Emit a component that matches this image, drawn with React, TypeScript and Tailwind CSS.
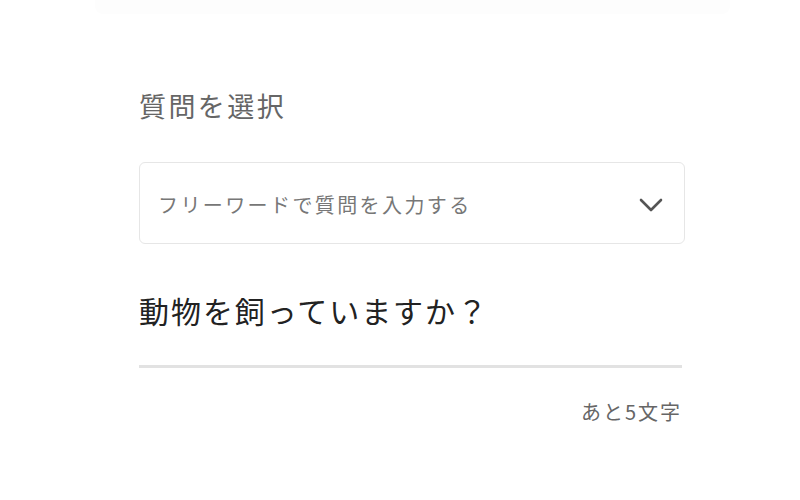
const FONT = "font-['Noto_Sans_CJK_JP','Noto_Sans',sans-serif]";

function Chevron() {
  return (
    <svg width="24" height="15" viewBox="0 0 24 15" fill="none" className="text-[#555]">
      <polyline
        points="2,2 12,12 22,2"
        stroke="currentColor"
        strokeWidth="2.6"
        strokeLinecap="round"
        strokeLinejoin="round"
      />
    </svg>
  );
}

export default function App() {
  return (
    <div className={`min-h-[500px] w-[800px] bg-white ${FONT}`}>
      {/* faint edge of the block above */}
      <div className="ml-[95px] h-[14px] w-[635px] rounded-b-[8px] bg-[#fdfdfd]" />

      <div className="ml-[139px] w-[546px] pt-[72px]">
        <h2 className="text-[27px] leading-[40px] tracking-[0.09em] text-[#666]">質問を選択</h2>

        <button
          type="button"
          className="mt-[36px] flex h-[82px] w-full items-center justify-between rounded-[6px] border border-[#e6e6e6] pl-[18px] pr-[21px] text-left"
        >
          <span className="pt-[4px] text-[20px] tracking-[0.12em] text-[#777]">
            フリーワードで質問を入力する
          </span>
          <span className="pt-[4px]">
            <Chevron />
          </span>
        </button>

        <div className="mr-[3px] mt-[44px]">
          <p className="text-[30px] leading-[44px] tracking-[0.065em] text-[#222]">動物を飼っていますか？</p>
          <div className="mt-[33px] h-[3px] w-full bg-[#e2e2e2]" />
          <p className="mt-[30px] text-right text-[20px] leading-[28px] tracking-[0.1em] text-[#666]">
            あと5文字
          </p>
        </div>
      </div>
    </div>
  );
}
